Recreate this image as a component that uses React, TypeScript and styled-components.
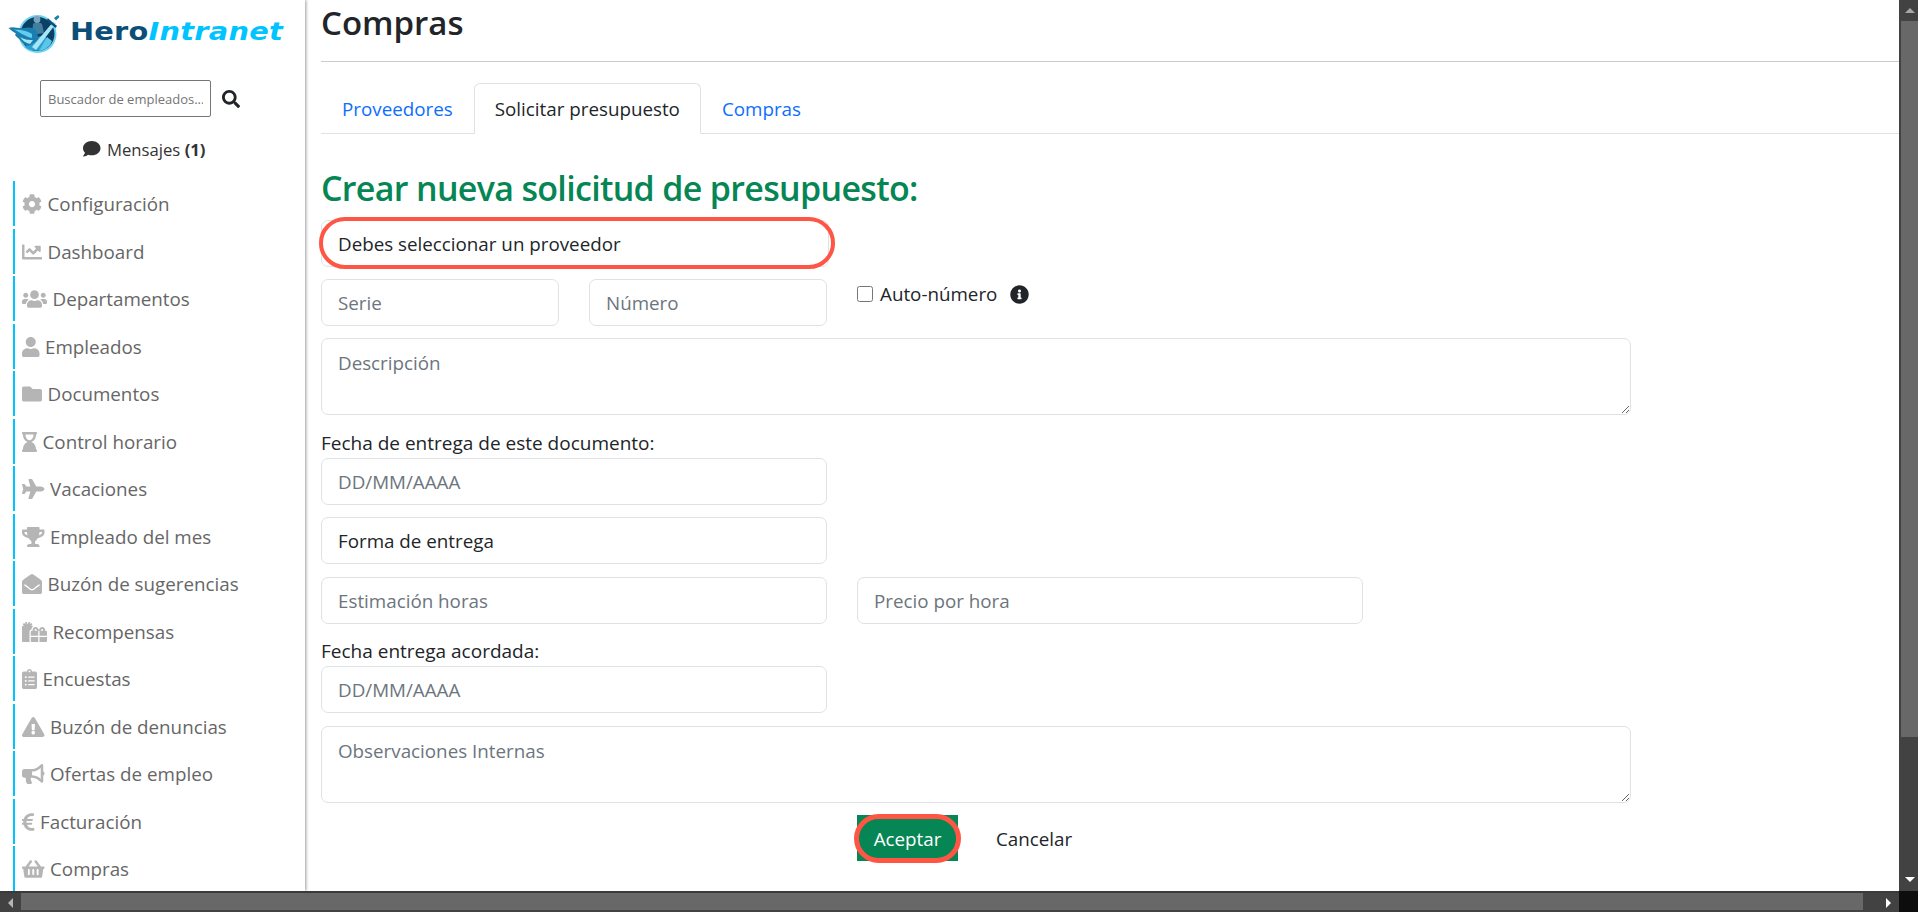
import styled, { createGlobalStyle } from "styled-components";
import {
    FaBullhorn,
    FaChartLine,
    FaClipboardList,
    FaCog,
    FaComment,
    FaEnvelopeOpen,
    FaEuroSign,
    FaExclamationTriangle,
    FaFolder,
    FaGifts,
    FaHourglassEnd,
    FaInfoCircle,
    FaPlane,
    FaSearch,
    FaShoppingBasket,
    FaTrophy,
    FaUser,
    FaUsers,
} from "react-icons/fa";

const FONT = `"Open Sans", "Noto Sans", sans-serif`;

const GlobalStyle = createGlobalStyle`
    html, body {
        margin: 0;
        height: 100%;
        overflow: hidden;
        background: #fff;
    }
    * {
        box-sizing: border-box;
    }
    body {
        font-family: ${FONT};
        font-size: 19px;
        color: #212529;
    }
`;

const Frame = styled.div`
    width: 1918px;
    height: 912px;
    display: flex;
    flex-direction: column;
`;

const Body = styled.div`
    flex: 1;
    min-height: 0;
    display: flex;
`;

const Sidebar = styled.aside`
    width: 305px;
    flex: none;
    overflow: hidden;
    box-shadow: 1px 0 3px rgba(0, 0, 0, 0.4);
    z-index: 1;
`;

const Brand = styled.div`
    height: 56px;
    padding: 13px 0 0 8px;
    display: flex;
    align-items: flex-start;
    gap: 10px;
`;

const BrandName = styled.div`
    margin-top: 7px;
    font-family: "DejaVu Sans", sans-serif;
    font-weight: 700;
    font-size: 24px;
    line-height: 1;
    letter-spacing: 0.2px;
    white-space: nowrap;
    color: #0b4f78;
    transform: scaleX(1.2);
    transform-origin: left center;
`;

const BrandAccent = styled.span`
    font-style: italic;
    color: #00c4ff;
`;

const SearchRow = styled.div`
    margin-top: 24px;
    padding-left: 40px;
    display: flex;
    align-items: center;
    gap: 11px;
`;

const SearchInput = styled.input`
    width: 171px;
    height: 37px;
    padding: 0 7px;
    font-family: ${FONT};
    font-size: 13px;
    border: 1px solid #767676;
    border-radius: 2px;
    &::placeholder {
        color: #757575;
    }
`;

const SearchButton = styled.span`
    display: flex;
    font-size: 18px;
    color: #212529;
`;

const Messages = styled.div`
    margin-top: 17px;
    height: 30px;
    padding-right: 16px;
    display: flex;
    align-items: center;
    justify-content: center;
    gap: 6px;
    font-size: 16.7px;
    color: #333;
    & svg {
        font-size: 17.5px;
    }
    & b {
        font-weight: 700;
    }
`;

const MenuList = styled.ul`
    list-style: none;
    margin: 17px 0 0 13px;
    padding: 0;
    display: flex;
    flex-direction: column;
    gap: 2.5px;
`;

const MenuItem = styled.li`
    height: 45px;
    padding: 1px 0 0 7px;
    border-left: 2px solid #00c4ff;
    display: flex;
    align-items: center;
    gap: 5.5px;
    font-size: 18.8px;
    color: #666;
    white-space: nowrap;
`;

const MenuIcon = styled.span<{ $width: number }>`
    width: ${(p) => p.$width}px;
    flex: none;
    display: flex;
    color: #b5b5b5;
    & svg {
        width: 100%;
        height: 20px;
    }
`;

const Main = styled.main`
    flex: 1;
    min-width: 0;
    padding: 0 0 0 16px;
    overflow: hidden;
`;

const PageTitle = styled.h3`
    margin: 0;
    height: 62px;
    font-size: 33px;
    font-weight: 600;
    line-height: 46px;
    color: #212529;
    border-bottom: 1px solid #c9ccd0;
`;

const Tabs = styled.nav`
    margin-top: 21px;
    height: 51px;
    display: flex;
    border-bottom: 1px solid #dee2e6;
`;

const Tab = styled.a<{ $active?: boolean }>`
    height: 51px;
    padding: 1px 20px 0;
    display: flex;
    align-items: center;
    font-size: 18.8px;
    border: 1px solid ${(p) => (p.$active ? "#dee2e6" : "transparent")};
    border-bottom-color: ${(p) => (p.$active ? "#fff" : "transparent")};
    border-radius: 6px 6px 0 0;
    color: ${(p) => (p.$active ? "#212529" : "#0d6efd")};
`;

const FormTitle = styled.h2`
    margin: 31px 0 0;
    height: 46px;
    line-height: 46px;
    font-size: 34px;
    font-weight: 600;
    letter-spacing: -0.68px;
    color: #068654;
`;

const Form = styled.form`
    margin-top: 9px;
    width: 1310px;
    display: flex;
    flex-direction: column;
`;

const Row = styled.div<{ $top?: number }>`
    display: flex;
    gap: 30px;
    margin-top: ${(p) => p.$top ?? 12}px;
`;

const Field = styled.input<{ $width?: number }>`
    width: ${(p) => p.$width ?? 506}px;
    height: 47px;
    padding: 0 16px;
    font-family: ${FONT};
    font-size: 18.8px;
    color: #212529;
    border: 1px solid #dee2e6;
    border-radius: 7px;
    background: #fff;
    &::placeholder {
        color: #6c757d;
    }
`;

const SelectBox = styled.div<{ $width: number }>`
    position: relative;
    width: ${(p) => p.$width}px;
    height: 47px;
    padding: 0 16px;
    display: flex;
    align-items: center;
    font-size: 18.8px;
    color: #212529;
    border: 1px solid #dee2e6;
    border-radius: 7px;
`;

const Ring = styled.span`
    position: absolute;
    left: -3px;
    top: -4px;
    width: 516px;
    height: 52px;
    border: 4px solid #ff5545;
    border-radius: 26px;
`;

const TextArea = styled.textarea`
    display: block;
    width: 1310px;
    height: 77px;
    padding: 11px 16px;
    font-family: ${FONT};
    font-size: 18.8px;
    color: #212529;
    border: 1px solid #dee2e6;
    border-radius: 7px;
    &::placeholder {
        color: #6c757d;
    }
`;

const FieldLabel = styled.label<{ $top?: number }>`
    display: block;
    margin-top: ${(p) => p.$top ?? 15}px;
    margin-bottom: 2px;
    height: 26px;
    line-height: 26px;
    font-size: 19px;
`;

const AutoNumber = styled.label`
    display: flex;
    align-items: center;
    align-self: flex-start;
    height: 30px;
    font-size: 18.8px;
`;

const Check = styled.input`
    width: 16px;
    height: 16px;
    margin: 0 7px 0 0;
`;

const InfoIcon = styled.span`
    display: flex;
    margin-left: 13px;
    font-size: 19px;
`;

const Actions = styled.div`
    margin-top: 12px;
    padding-left: 536px;
    display: flex;
    align-items: center;
    gap: 38px;
`;

const AcceptWrap = styled.span`
    position: relative;
    width: 101px;
    height: 46px;
    padding-top: 2px;
    display: flex;
    align-items: center;
    justify-content: center;
    font-size: 18.8px;
    color: #fff;
    background: #068654;
`;

const AcceptRing = styled.span`
    position: absolute;
    left: -3px;
    top: -1px;
    width: 107px;
    height: 49px;
    border: 5px solid #ff5545;
    border-radius: 25px;
`;

const Cancel = styled.span`
    padding-top: 2px;
    font-size: 18.8px;
    color: #212529;
`;

const VerticalBar = styled.div`
    width: 19px;
    flex: none;
    display: flex;
    flex-direction: column;
    background: #424242;
`;

const UpArrowBox = styled.div`
    height: 21px;
    flex: none;
    padding-left: 2px;
    display: flex;
    align-items: center;
    justify-content: center;
`;

const VerticalThumb = styled.div`
    height: 716px;
    margin-left: 2px;
    background: #686868;
`;

const Spacer = styled.div`
    flex: 1;
`;

const Arrow = styled.svg<{ $fill?: string }>`
    display: block;
    flex: none;
    fill: ${(p) => p.$fill ?? "#fff"};
`;

const DownArrowBox = styled.div`
    height: 20px;
    padding: 0 0 3px 2px;
    display: flex;
    align-items: center;
    justify-content: center;
`;

const HorizontalBar = styled.div`
    height: 21px;
    flex: none;
    display: flex;
    background: #424242;
    border-top: 2px solid #3a3a3a;
    z-index: 2;
`;

const LeftArrowBox = styled.div`
    width: 21px;
    flex: none;
    display: flex;
    align-items: center;
    justify-content: center;
`;

const HorizontalThumb = styled.div`
    width: 1842px;
    height: 17px;
    background: #686868;
`;

const RightArrowBox = styled.div`
    flex: 1;
    padding-left: 14px;
    display: flex;
    align-items: center;
    justify-content: center;
`;

const Corner = styled.div`
    width: 19px;
    flex: none;
    margin-top: -2px;
    background: #0d0d0d;
`;

const menu = [
    { icon: FaCog, width: 20, label: "Configuración" },
    { icon: FaChartLine, width: 20, label: "Dashboard" },
    { icon: FaUsers, width: 25, label: "Departamentos" },
    { icon: FaUser, width: 17.5, label: "Empleados" },
    { icon: FaFolder, width: 20, label: "Documentos" },
    { icon: FaHourglassEnd, width: 15, label: "Control horario" },
    { icon: FaPlane, width: 22.5, label: "Vacaciones" },
    { icon: FaTrophy, width: 22.5, label: "Empleado del mes" },
    { icon: FaEnvelopeOpen, width: 20, label: "Buzón de sugerencias" },
    { icon: FaGifts, width: 25, label: "Recompensas" },
    { icon: FaClipboardList, width: 15, label: "Encuestas" },
    { icon: FaExclamationTriangle, width: 22.5, label: "Buzón de denuncias" },
    { icon: FaBullhorn, width: 22.5, label: "Ofertas de empleo" },
    { icon: FaEuroSign, width: 12.5, label: "Facturación" },
    { icon: FaShoppingBasket, width: 22.5, label: "Compras" },
];

function Logo() {
    return (
        <svg width="52" height="42" viewBox="0 0 52 42">
            <circle cx="29.5" cy="21" r="19" fill="#6fd2ef" />
            <circle cx="29.5" cy="21" r="17" fill="#0b3f63" />
            <path d="M17 34 C22 39 36 40 43 31 L36 22 L24 26 Z" fill="#2a9fd0" />
            <path d="M25 11 C27 9 32 9 34 11 L36 20 L24 22 Z" fill="#3f7f9f" />
            <circle cx="29" cy="6.5" r="3.4" fill="#7ba4ba" />
            <path
                d="M0.5 15 C6 13 10 16 16 15 C20 14 25 14 28 17 L31 27 L21 33 C15 32 13 27 10 25 C8 23 6 22 8 20.5 C5 19 3 17 0.5 15 Z"
                fill="#1a7fb0"
            />
            <path d="M6 16.5 C12 17 18 17 24 21 L24 25 C19 24 14 21 6 16.5 Z" fill="#62cdf0" />
            <path d="M12 24 C17 27 21 27 25 27 L22 31 C18 30 15 28 12 24 Z" fill="#a7e6f7" />
            <path d="M24 34 L45.5 8.5 L48 10.5 L28 37 Z" fill="#a7e6f7" />
            <path d="M40 5.5 L49 13 L47.5 15 L38.5 7.5 Z" fill="#0b4f78" />
            <path d="M46 5 L50 2 L51.5 4 L48 7.5 Z" fill="#1a7fb0" />
            <path d="M31 38 L39 24 L44 28 C42 33 38 37 31 38 Z" fill="#5cc6ea" />
        </svg>
    );
}

function App() {
    return (
        <Frame>
            <GlobalStyle />
            <Body>
                <Sidebar>
                    <Brand>
                        <Logo />
                        <BrandName>
                            Hero<BrandAccent>Intranet</BrandAccent>
                        </BrandName>
                    </Brand>
                    <SearchRow>
                        <SearchInput placeholder="Buscador de empleados..." />
                        <SearchButton>
                            <FaSearch />
                        </SearchButton>
                    </SearchRow>
                    <Messages>
                        <FaComment />
                        <span>
                            Mensajes <b>(1)</b>
                        </span>
                    </Messages>
                    <MenuList>
                        {menu.map(({ icon: Icon, width, label }) => (
                            <MenuItem key={label}>
                                <MenuIcon $width={width}>
                                    <Icon />
                                </MenuIcon>
                                {label}
                            </MenuItem>
                        ))}
                    </MenuList>
                </Sidebar>
                <Main>
                    <PageTitle>Compras</PageTitle>
                    <Tabs>
                        <Tab>Proveedores</Tab>
                        <Tab $active>Solicitar presupuesto</Tab>
                        <Tab>Compras</Tab>
                    </Tabs>
                    <FormTitle>Crear nueva solicitud de presupuesto:</FormTitle>
                    <Form>
                        <SelectBox $width={508}>
                            Debes seleccionar un proveedor
                            <Ring />
                        </SelectBox>
                        <Row>
                            <Field $width={238} placeholder="Serie" />
                            <Field $width={238} placeholder="Número" />
                            <AutoNumber>
                                <Check type="checkbox" />
                                Auto-número
                                <InfoIcon>
                                    <FaInfoCircle />
                                </InfoIcon>
                            </AutoNumber>
                        </Row>
                        <Row>
                            <TextArea placeholder="Descripción" />
                        </Row>
                        <FieldLabel>Fecha de entrega de este documento:</FieldLabel>
                        <Field placeholder="DD/MM/AAAA" />
                        <Row>
                            <SelectBox $width={506}>Forma de entrega</SelectBox>
                        </Row>
                        <Row $top={13}>
                            <Field placeholder="Estimación horas" />
                            <Field placeholder="Precio por hora" />
                        </Row>
                        <FieldLabel $top={14}>Fecha entrega acordada:</FieldLabel>
                        <Field placeholder="DD/MM/AAAA" />
                        <Row $top={13}>
                            <TextArea placeholder="Observaciones Internas" />
                        </Row>
                        <Actions>
                            <AcceptWrap>
                                Aceptar
                                <AcceptRing />
                            </AcceptWrap>
                            <Cancel>Cancelar</Cancel>
                        </Actions>
                    </Form>
                </Main>
                <VerticalBar>
                    <UpArrowBox>
                        <Arrow $fill="#a8a8a8" width="10" height="5" viewBox="0 0 10 5">
                            <path d="M0 5 H10 L5 0 Z" />
                        </Arrow>
                    </UpArrowBox>
                    <VerticalThumb />
                    <Spacer />
                    <DownArrowBox>
                        <Arrow width="10" height="5" viewBox="0 0 10 5">
                            <path d="M0 0 H10 L5 5 Z" />
                        </Arrow>
                    </DownArrowBox>
                </VerticalBar>
            </Body>
            <HorizontalBar>
                <LeftArrowBox>
                    <Arrow $fill="#b5b5b5" width="5" height="10" viewBox="0 0 5 10">
                        <path d="M5 0 V10 L0 5 Z" />
                    </Arrow>
                </LeftArrowBox>
                <HorizontalThumb />
                <RightArrowBox>
                    <Arrow width="5" height="10" viewBox="0 0 5 10">
                        <path d="M0 0 V10 L5 5 Z" />
                    </Arrow>
                </RightArrowBox>
                <Corner />
            </HorizontalBar>
        </Frame>
    );
}

export default App;
